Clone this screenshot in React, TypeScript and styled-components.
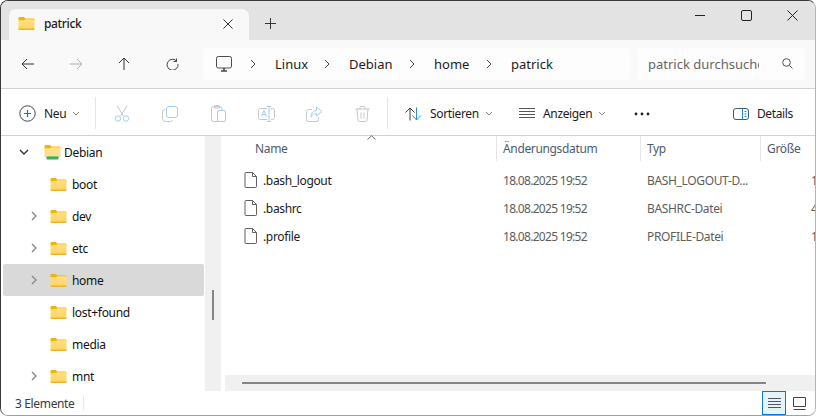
import React from "react";
import styled, { createGlobalStyle } from "styled-components";

const Global = createGlobalStyle`
  html, body { margin: 0; padding: 0; background: #fff; }
  #root { width: 816px; height: 416px; overflow: hidden; }
  * { box-sizing: border-box; }
`;

const Window = styled.div`
  width: 816px; height: 416px; display: flex; flex-direction: column; overflow: hidden;
  font-family: "Noto Sans", "Open Sans", sans-serif; font-size: 12px; color: #1a1a1a;
  letter-spacing: -0.35px;
  background: #fff;
  border-top: 1px solid #3a3a3a; border-left: 1px solid #3a3a3a;
  border-right: 1px solid #b4b4b4; border-bottom: 1px solid #a0a0a0;
  border-radius: 8px;
`;
const TitleBar = styled.div`
  height: 39px; flex: none; background: #e3e3e3; display: flex; align-items: flex-end; padding-left: 8px;
`;
const Tab = styled.div`
  width: 240px; height: 31px; background: #f8f8f8; border-radius: 7px 7px 0 0;
  display: flex; align-items: center; padding: 0 16px 2px 9px; font-weight: 500;
`;
const TabLabel = styled.span`margin-left: 9px; flex: 1; font-size: 12px; color: #1c1c1c;`;
const NewTab = styled.div`margin-left: 16px; height: 31px; width: 16px; display: flex; align-items: center; padding-bottom: 2px;`;
const WindowButtons = styled.div`margin-left: auto; align-self: stretch; display: flex; align-items: center; padding-bottom: 10px;`;
const WindowButton = styled.div`width: 46px; display: flex; justify-content: center;`;
const NavBar = styled.div`
  height: 49px; flex: none; background: #f9f9f9; border-bottom: 1px solid #d2d2d2;
  display: flex; align-items: center; padding-left: 3px; padding-bottom: 1px;
`;
const NavButton = styled.div`width: 48px; display: flex; justify-content: center;`;
const Crumbs = styled.div`
  width: 427px; height: 32px; margin-left: 7px; background: #fdfdfd; border-radius: 4px;
  display: flex; align-items: center; padding-left: 13px; font-size: 13px; letter-spacing: 0;
`;
const Crumb = styled.span<{ $w: number }>`width: ${p => p.$w}px; color: #1c1c1c;`;
const CrumbSep = styled.span`width: 44px; display: flex; justify-content: center; margin-left: -1px;`;
const Search = styled.div`
  width: 167px; height: 32px; margin-left: 8px; background: #fdfdfd; border-radius: 4px;
  display: flex; align-items: center; padding: 0 12px 0 10px; color: #666; font-size: 13px; letter-spacing: 0;
`;
const SearchText = styled.span`width: 111px; overflow: hidden; white-space: nowrap;`;
const SearchIcon = styled.svg`margin-left: auto;`;
const Toolbar = styled.div`
  height: 47px; flex: none; background: #fff; border-bottom: 1px solid #d2d2d2;
  display: flex; align-items: center; padding: 3px 22px 0 18px;
`;
const ToolText = styled.span`color: #1c1c1c; margin-left: 8px;`;
const ToolGroup = styled.div<{ $w?: number; $end?: boolean }>`
  display: flex; align-items: center; ${p => (p.$w ? `width: ${p.$w}px;` : "")}
  ${p => (p.$end ? "margin-left: auto;" : "")}
`;
const Caret = styled.span`margin-left: 6px; display: flex;`;
const ToolSep = styled.div<{ $mr: number; $ml: number }>`
  width: 1px; height: 32px; background: #e6e6e6; margin: -2px ${p => p.$mr}px 0 ${p => p.$ml}px;
`;
const IconCell = styled.div`width: 48px; display: flex; justify-content: center;`;
const Body = styled.div`flex: 1; min-height: 0; display: flex;`;
const Side = styled.div`width: 204px; flex: none; padding: 0 0 0 2px; overflow: hidden; letter-spacing: -0.3px;`;
const SideRow = styled.div<{ $active?: boolean }>`
  width: 201px; height: 32px; display: flex; align-items: center; border-radius: 2px;
  background: ${p => (p.$active ? "#d9d9d9" : "transparent")}; color: #111; font-size: 12px;
`;
const Arrow = styled.div<{ $w: number; $pl?: number }>`
  width: ${p => p.$w}px; padding-left: ${p => p.$pl ?? 0}px; flex: none; display: flex; justify-content: center;
`;
const SideLabel = styled.span<{ $ml: number }>`margin-left: ${p => p.$ml}px;`;
const VScroll = styled.div`
  width: 16px; flex: none; background: #f0f0f0; display: flex; justify-content: center; padding-top: 154px;
`;
const VThumb = styled.div`width: 2px; height: 30px; background: #858585;`;
const Main = styled.div`flex: 1; min-width: 0; margin-left: 4px; display: flex; flex-direction: column; position: relative;`;
const HeaderRow = styled.div`
  height: 25px; flex: none; display: grid; grid-template-columns: 272px 144px 120px 120px; color: #4d5a72; font-size: 12px;
`;
const HeaderCell = styled.div<{ $pl: number; $line?: boolean }>`
  padding-left: ${p => p.$pl}px; display: flex; align-items: center;
  border-right: ${p => (p.$line ? "1px solid #e5e5e5" : "none")}; white-space: nowrap;
`;
const SortCaret = styled.div`position: absolute; left: 142px; top: -1px; display: flex;`;
const Rows = styled.div`flex: 1; padding-top: 5px; overflow: hidden;`;
const Row = styled.div`
  height: 28px; display: grid; grid-template-columns: 271px 144px 120px 120px; align-items: center; color: #5d5d5d;
`;
const NameCell = styled.div`display: flex; align-items: center; padding-left: 19px; color: #1a1a1a;`;
const NameText = styled.span`margin-left: 6px;`;
const Cell = styled.div<{ $pl: number; $tight?: boolean }>`
  padding-left: ${p => p.$pl}px; white-space: nowrap; ${p => (p.$tight ? "letter-spacing: -0.7px;" : "")}
`;
const HScroll = styled.div`
  height: 16px; flex: none; background: #f0f0f0; padding: 7px 0 0 17px;
`;
const HThumb = styled.div`height: 2px; width: 524px; background: #858585;`;
const Status = styled.div`
  height: 24px; flex: none; display: flex; align-items: center; padding-left: 14px; color: #3a3a3a; background: #fff;
`;
const StatusText = styled.span`width: 68px;`;
const StatusSep = styled.div`width: 1px; height: 14px; background: #e8e8e8;`;
const ViewButtons = styled.div`margin-left: auto; display: flex; align-items: center; padding-right: 4px;`;
const ViewButton = styled.div<{ $on?: boolean }>`
  width: 24px; height: 24px; display: flex; align-items: center; justify-content: center;
  border: ${p => (p.$on ? "1px solid #0a78d4" : "1px solid transparent")}; background: ${p => (p.$on ? "#e5f3fb" : "transparent")};
  margin-left: ${p => (p.$on ? 0 : 1)}px;
`;

const Folder = ({ id }: { id: string }) => (
  <svg width="17" height="15" viewBox="0 0 17 15">
    <defs>
      <linearGradient id={id} x1="0" y1="0" x2="0" y2="1">
        <stop offset="0" stopColor="#ffe08a" />
        <stop offset="1" stopColor="#ffd35c" />
      </linearGradient>
    </defs>
    <path d="M0.5 2a1 1 0 0 1 1-1h4.2l1.8 1.6h8a1 1 0 0 1 1 1V5H.5z" fill="#f5b301" />
    <path d="M.5 4.2h5.2l1.8-1h8a1 1 0 0 1 1 1v8.6a1 1 0 0 1-1 1h-14a1 1 0 0 1-1-1z" fill={`url(#${id})`} />
    <path d="M.5 12.6v.4a1 1 0 0 0 1 1h14a1 1 0 0 0 1-1v-.4z" fill="#efb32c" />
  </svg>
);
const DriveFolder = () => (
  <svg width="17" height="16" viewBox="0 0 17 16">
    <path d="M.5 2a1 1 0 0 1 1-1h4.2l1.8 1.6h8a1 1 0 0 1 1 1V5H.5z" fill="#f5b301" />
    <path d="M.5 4.2h5.2l1.8-1h8a1 1 0 0 1 1 1V12H.5z" fill="#ffe08a" />
    <rect x="0.5" y="12" width="16" height="1" fill="#cfd8c5" />
    <rect x="2.5" y="12.5" width="12" height="3" rx=".8" fill="#36b34a" />
  </svg>
);
const Chevron = ({ open }: { open?: boolean }) => (
  <svg width="10" height="10" viewBox="0 0 10 10" fill="none" stroke={open ? "#333" : "#8a8a8a"} strokeWidth="1.4">
    <path d={open ? "M1 3l4 4 4-4" : "M3 1l4 4-4 4"} />
  </svg>
);
const Small = () => (
  <svg width="8" height="6" viewBox="0 0 8 6" fill="none" stroke="#8a8a8a" strokeWidth="1"><path d="M1 1l3 3 3-3" /></svg>
);
const Line = ({ d, c = "#3a3a3a", w = 16, h = 16 }: { d: string; c?: string; w?: number; h?: number }) => (
  <svg width={w} height={h} viewBox={`0 0 ${w} ${h}`} fill="none" stroke={c} strokeWidth="1"><path d={d} /></svg>
);
const Doc = () => (
  <svg width="13" height="16" viewBox="0 0 13 16" fill="none" stroke="#5f5f5f" strokeWidth="1">
    <path d="M1.5.5h6.5l4 4v10a1 1 0 0 1-1 1h-9.500a1 1 0 0 1-1-1v-13a1 1 0 0 1 1-1z" transform="translate(.5 0)" />
    <path d="M8.500.5v4h4" />
  </svg>
);
const Blue = "#a3cff2";
const Gray = "#c6c6c6";
const Scissors = () => (
  <svg width="16" height="17" viewBox="0 0 16 17" fill="none" strokeWidth="1">
    <path d="M3 1l6.500 10M13 1L6.500 11" stroke={Gray} />
    <circle cx="4" cy="13.500" r="2.700" stroke={Blue} /><circle cx="12" cy="13.500" r="2.700" stroke={Blue} />
  </svg>
);
const Copy = () => (
  <svg width="16" height="16" viewBox="0 0 16 16" fill="none" strokeWidth="1">
    <path d="M3.500 3.500h-1a2 2 0 0 0-2 2v7a3 3 0 0 0 3 3h5a2 2 0 0 0 2-1.500" stroke={Gray} />
    <rect x="4.500" y=".5" width="11" height="11" rx="2.500" stroke={Blue} />
  </svg>
);
const Paste = () => (
  <svg width="15" height="17" viewBox="0 0 15 17" fill="none" strokeWidth="1">
    <path d="M7 16.500H2.500a2 2 0 0 1-2-2v-11a2 2 0 0 1 2-2h6.500a2 2 0 0 1 2 2v1.500M3.500 3V1.500a1 1 0 0 1 1-1h3a1 1 0 0 1 1 1V3z" stroke={Gray} />
    <rect x="6.500" y="5.500" width="8" height="11" rx="1.500" stroke={Blue} />
  </svg>
);
const Rename = () => (
  <svg width="17" height="16" viewBox="0 0 17 16" fill="none" strokeWidth="1">
    <path d="M9 2.500H2.500a2 2 0 0 0-2 2v7a2 2 0 0 0 2 2H9M13 2.500h1.500a2 2 0 0 1 2 2v7a2 2 0 0 1-2 2H13" stroke={Gray} />
    <path d="M3.500 10.500l2.500-6 2.500 6M4.500 8.500h3M9 .5h4M9 15.500h4M11 .5v15" stroke={Blue} />
  </svg>
);
const Share = () => (
  <svg width="17" height="16" viewBox="0 0 17 16" fill="none" strokeWidth="1">
    <path d="M6 3.500H2.500a2 2 0 0 0-2 2v8a2 2 0 0 0 2 2h8a2 2 0 0 0 2-2v-2" stroke={Gray} />
    <path d="M10.500 1l5.500 4.500-5.500 4.500V7.500C8 7.500 6 9 5 11c0-4 2-6.500 5.500-6.500z" stroke={Blue} />
  </svg>
);
const Trash = () => (
  <svg width="15" height="16" viewBox="0 0 15 16" fill="none" stroke={Gray} strokeWidth="1">
    <path d="M.5 3h14M5 3V1.500a1 1 0 0 1 1-1h3a1 1 0 0 1 1 1V3M2 3l1 11a1.500 1.500 0 0 0 1.500 1.500h6A1.500 1.500 0 0 0 12 14l1-11M6 6.500v6M9 6.500v6" />
  </svg>
);
const SortIcon = () => (
  <svg width="17" height="14" viewBox="0 0 17 14" fill="none" strokeWidth="1">
    <path d="M5 13.500V1M.5 5.500L5 1l4.500 4.500" stroke="#3a3a3a" />
    <path d="M11.500 .5V13M7.500 8.500l4 4.500 4.500-4.500" stroke="#2b8fe0" />
  </svg>
);
const ListIcon = ({ w = 16 }: { w?: number }) => (
  <svg width={w} height="11" viewBox={`0 0 ${w} 11`} stroke="#555" strokeWidth="1"><path d={`M0 .5h${w}M0 3.500h${w}M0 6.500h${w}M0 9.500h${w}`} /></svg>
);
const Dots = () => (
  <svg width="16" height="4" viewBox="0 0 16 4" fill="#222"><circle cx="2" cy="2" r="1.400" /><circle cx="8" cy="2" r="1.400" /><circle cx="14" cy="2" r="1.400" /></svg>
);
const DetailsIcon = () => (
  <svg width="16" height="12" viewBox="0 0 16 12" fill="none" strokeWidth="1">
    <rect x=".5" y=".5" width="15" height="11" rx="2.500" stroke="#3a5a7a" />
    <path d="M9.500 .5v11" stroke="#1a86d8" />
    <path d="M11.500 3.500h2M11.500 6h2M11.500 8.500h2" stroke="#1a86d8" />
  </svg>
);
const Monitor = () => (
  <svg width="16" height="16" viewBox="0 0 16 16" fill="none" stroke="#4a4a4a" strokeWidth="1">
    <rect x=".5" y=".5" width="15" height="11.500" rx="1.800" />
    <path d="M5 15h6M8 12v3" strokeWidth="1.500" />
  </svg>
);
const CrumbChevron = () => <Line w={8} h={10} d="M2 1l4 4-4 4" c="#444" />;
const Plus = () => (
  <svg width="17" height="17" viewBox="0 0 17 17" fill="none"><circle cx="8.500" cy="8.500" r="7.700" stroke="#444" /><path d="M8.500 5v7M5 8.500h7" stroke="#0078d4" strokeWidth="1.200" /></svg>
);

const tree = [
  { n: "boot", a: false }, { n: "dev", a: true }, { n: "etc", a: true }, { n: "home", a: true, on: true },
  { n: "lost+found", a: false }, { n: "media", a: false }, { n: "mnt", a: true },
];
const files = [
  { n: ".bash_logout", t: "BASH_LOGOUT-D...", s: "1 KB" },
  { n: ".bashrc", t: "BASHRC-Datei", s: "4 KB" },
  { n: ".profile", t: "PROFILE-Datei", s: "1 KB" },
];

export default function App() {
  return (
    <Window>
      <Global />
      <TitleBar>
        <Tab>
          <Folder id="tabf" />
          <TabLabel>patrick</TabLabel>
          <Line w={10} h={10} d="M.5 .5l9 9M9.500 .5l-9 9" c="#333" />
        </Tab>
        <NewTab><Line w={11} h={11} d="M5.500 0v11M0 5.500h11" c="#333" /></NewTab>
        <WindowButtons>
          <WindowButton><Line w={10} h={2} d="M0 .5h10" c="#222" /></WindowButton>
          <WindowButton><Line w={11} h={11} d="M2 .5h7a1.500 1.500 0 0 1 1.500 1.500v7a1.500 1.500 0 0 1-1.500 1.500h-7a1.500 1.500 0 0 1-1.500-1.500v-7a1.500 1.500 0 0 1 1.500-1.500z" c="#222" /></WindowButton>
          <WindowButton><Line w={11} h={11} d="M.5 .5l10 10M10.500 .5l-10 10" c="#222" /></WindowButton>
        </WindowButtons>
      </TitleBar>
      <NavBar>
        <NavButton><Line w={14} h={12} d="M13 6H1M6 1L1 6l5 5" c="#333" /></NavButton>
        <NavButton><Line w={14} h={12} d="M1 6h12M8 1l5 5-5 5" c="#b0b0b0" /></NavButton>
        <NavButton><Line w={12} h={14} d="M6 13V1M1 6l5-5 5 5" c="#333" /></NavButton>
        <NavButton><Line w={13} h={13} d="M10.500 1.500v3h-3M11 4.500A5.500 5.500 0 1 0 12 7" c="#444" /></NavButton>
        <Crumbs>
          <Monitor />
          <CrumbSep><CrumbChevron /></CrumbSep>
          <Crumb $w={31}>Linux</Crumb>
          <CrumbSep><CrumbChevron /></CrumbSep>
          <Crumb $w={42}>Debian</Crumb>
          <CrumbSep><CrumbChevron /></CrumbSep>
          <Crumb $w={34}>home</Crumb>
          <CrumbSep><CrumbChevron /></CrumbSep>
          <Crumb $w={44}>patrick</Crumb>
        </Crumbs>
        <Search>
          <SearchText>patrick durchsuchen</SearchText>
          <SearchIcon width="11" height="11" viewBox="0 0 11 11" fill="none" stroke="#555" strokeWidth="1"><circle cx="4.500" cy="4.500" r="3.800" /><path d="M7.300 7.300L10.500 10.500" /></SearchIcon>
        </Search>
      </NavBar>
      <Toolbar>
        <ToolGroup $w={75}>
          <Plus />
          <ToolText>Neu</ToolText>
          <Caret><Small /></Caret>
        </ToolGroup>
        <ToolSep $ml={1} $mr={2} />
        <IconCell><Scissors /></IconCell>
        <IconCell><Copy /></IconCell>
        <IconCell><Paste /></IconCell>
        <IconCell><Rename /></IconCell>
        <IconCell><Share /></IconCell>
        <IconCell><Trash /></IconCell>
        <ToolSep $ml={1} $mr={17} />
        <ToolGroup $w={114}>
          <SortIcon />
          <ToolText>Sortieren</ToolText>
          <Caret><Small /></Caret>
        </ToolGroup>
        <ToolGroup $w={115}>
          <ListIcon />
          <ToolText>Anzeigen</ToolText>
          <Caret><Small /></Caret>
        </ToolGroup>
        <Dots />
        <ToolGroup $end>
          <DetailsIcon />
          <ToolText>Details</ToolText>
        </ToolGroup>
      </Toolbar>
      <Body>
        <Side>
          <SideRow>
            <Arrow $w={41}><Chevron open /></Arrow>
            <DriveFolder />
            <SideLabel $ml={3}>Debian</SideLabel>
          </SideRow>
          {tree.map(t => (
            <SideRow key={t.n} $active={t.on}>
              <Arrow $w={47} $pl={14}>{t.a ? <Chevron /> : null}</Arrow>
              <Folder id={"f" + t.n.replace("+", "")} />
              <SideLabel $ml={5}>{t.n}</SideLabel>
            </SideRow>
          ))}
        </Side>
        <VScroll><VThumb /></VScroll>
        <Main>
          <SortCaret><Line w={9} h={6} d="M.5 4.500L4.500 .8l4 3.700" c="#666" /></SortCaret>
          <HeaderRow>
            <HeaderCell $pl={30} $line>Name</HeaderCell>
            <HeaderCell $pl={6} $line>Änderungsdatum</HeaderCell>
            <HeaderCell $pl={6} $line>Typ</HeaderCell>
            <HeaderCell $pl={6}>Größe</HeaderCell>
          </HeaderRow>
          <Rows>
            {files.map(f => (
              <Row key={f.n}>
                <NameCell><Doc /><NameText>{f.n}</NameText></NameCell>
                <Cell $pl={7} $tight>18.08.2025 19:52</Cell>
                <Cell $pl={7}>{f.t}</Cell>
                <Cell $pl={51}>{f.s}</Cell>
              </Row>
            ))}
          </Rows>
          <HScroll><HThumb /></HScroll>
        </Main>
      </Body>
      <Status>
        <StatusText>3 Elemente</StatusText>
        <StatusSep />
        <ViewButtons>
          <ViewButton $on><ListIcon w={13} /></ViewButton>
          <ViewButton><Line w={13} h={13} d="M.5 .5h12v9h-12zM.5 12.500h12" c="#444" /></ViewButton>
        </ViewButtons>
      </Status>
    </Window>
  );
}
